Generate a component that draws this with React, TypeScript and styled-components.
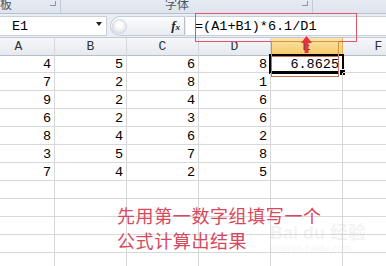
import React from "react";
import styled, { createGlobalStyle } from "styled-components";

const Global = createGlobalStyle`
  html, body { margin: 0; padding: 0; background: #fff; }
  body { width: 386px; height: 266px; overflow: hidden; }
`;

const Page = styled.div`
  position: relative;
  width: 386px;
  height: 266px;
  overflow: hidden;
  display: flex;
  flex-direction: column;
  background: #fff;
`;

const Ribbon = styled.div`
  height: 13px;
  flex: none;
  display: flex;
  background: linear-gradient(#e6ebf2, #dde4ed);
  border-bottom: 1px solid #b7c0cc;
  overflow: hidden;
`;

const RibbonGroup = styled.div<{ $w: number }>`
  width: ${(p) => p.$w}px;
  flex: none;
  position: relative;
  display: flex;
  align-items: flex-start;
  border-right: 1px solid #c2cad6;
  box-sizing: border-box;
`;

const GroupLabel = styled.span<{ $left: number }>`
  margin-left: ${(p) => p.$left}px;
  margin-top: -3px;
  font: 12px/13px "Noto Sans CJK SC", sans-serif;
  color: #4c5563;
`;

const Launcher = styled.span<{ $left: number }>`
  margin-left: ${(p) => p.$left}px;
  margin-top: 1px;
  width: 6px;
  height: 5px;
  border-right: 1px solid #8d96a3;
  border-bottom: 1px solid #8d96a3;
  box-sizing: border-box;
`;

const FormulaBar = styled.div`
  height: 23px;
  flex: none;
  display: flex;
  align-items: stretch;
  background: #e9eef4;
  padding: 2px 0 1px 0;
  box-sizing: border-box;
`;

const NameBox = styled.div`
  width: 107px;
  flex: none;
  background: #fff;
  border: 1px solid #c9d0da;
  border-left: none;
  box-sizing: border-box;
  display: flex;
  align-items: center;
  justify-content: space-between;
  padding: 0 4px 0 12px;
  font: 13.5px "Liberation Mono", monospace;
  color: #000;
`;

const DropArrow = styled.span`
  width: 0;
  height: 0;
  border-left: 3.5px solid transparent;
  border-right: 3.5px solid transparent;
  border-top: 4px solid #222;
  margin-top: -4px;
`;

const Capsule = styled.div`
  margin-left: 3px;
  width: 75px;
  flex: none;
  display: flex;
  align-items: center;
  justify-content: space-between;
  border-radius: 10px 0 0 10px;
  background: linear-gradient(#fbfcfd, #e8ecf1);
  border: 1px solid #c6cdd7;
  border-right: 1px solid #b8c0cb;
  box-sizing: border-box;
  padding-right: 4px;
`;

const Grip = styled.span`
  width: 13px;
  height: 13px;
  border-radius: 50%;
  margin-left: 1px;
  background: radial-gradient(circle at 50% 40%, #fff 20%, #e2e6ec 70%, #c9cfd8 100%);
  border: 1px solid #d3d8df;
`;

const Fx = styled.span`
  font: italic bold 13px "Liberation Serif", serif;
  color: #222;
  sub {
    font-size: 9px;
    vertical-align: baseline;
  }
`;

const FormulaInput = styled.div`
  flex: 1;
  background: #fff;
  border-top: 1px solid #c9d0da;
  border-bottom: 1px solid #c9d0da;
  margin-left: 1px;
  display: flex;
  align-items: center;
  padding-left: 9px;
  font: 13.5px "Liberation Mono", monospace;
  color: #000;
  white-space: pre;
`;

const Sheet = styled.div`
  display: grid;
  grid-template-columns: repeat(6, 72px);
  grid-auto-rows: 18px;
  margin-left: -17px;
`;

const HeaderCell = styled.div<{ $active?: boolean }>`
  height: 19px;
  box-sizing: border-box;
  display: flex;
  align-items: center;
  justify-content: center;
  font: 13px "Liberation Mono", monospace;
  color: #2f3339;
  border-top: 1px solid #c4cad2;
  border-right: 1px solid ${(p) => (p.$active ? "#e2b155" : "#d3d8de")};
  border-bottom: 1px solid ${(p) => (p.$active ? "#d8a13b" : "#b6bec8")};
  background: ${(p) =>
    p.$active
      ? "linear-gradient(#fbe3a8, #f5c96a)"
      : "linear-gradient(#f6f7f9, #e6e9ee)"};
`;

const Cell = styled.div<{ $selected?: boolean }>`
  position: relative;
  box-sizing: border-box;
  border-right: 1px solid #d8d8d8;
  border-bottom: 1px solid #d8d8d8;
  display: flex;
  align-items: center;
  justify-content: flex-end;
  padding: 2px 3px 0 0;
  font: 13.5px/16px "Liberation Mono", monospace;
  color: #000;
  ${(p) =>
    p.$selected &&
    `
    &::before {
      content: "";
      position: absolute;
      left: -2px; top: -1px; right: -2px; bottom: -2px;
      border: 2px solid #000;
      border-bottom-width: 3px;
    }
    &::after {
      content: "";
      position: absolute;
      right: -3px; bottom: -3px;
      width: 5px; height: 5px;
      background: #000;
      border: 1px solid #fff;
      border-right: none; border-bottom: none;
    }
  `}
`;

const Mark = styled.div<{ $l: number; $t: number; $w: number; $h: number; $c: string }>`
  position: absolute;
  left: ${(p) => p.$l}px;
  top: ${(p) => p.$t}px;
  width: ${(p) => p.$w}px;
  height: ${(p) => p.$h}px;
  border: 1px solid ${(p) => p.$c};
  box-sizing: border-box;
  pointer-events: none;
`;

const Arrow = styled.svg`
  position: absolute;
  left: 301px;
  top: 36px;
`;

const Note = styled.div`
  position: absolute;
  left: 117px;
  top: 203px;
  font: 18px/25px "Noto Sans CJK SC", sans-serif;
  letter-spacing: 0.6px;
  color: #d8485c;
`;

const Watermark = styled.div`
  position: absolute;
  left: 270px;
  top: 223px;
  color: rgba(200, 200, 200, 0.22);
  font: bold 18px/20px "Liberation Sans", "Noto Sans CJK SC", sans-serif;
  small {
    display: block;
    font: 9px/11px "Liberation Sans", sans-serif;
    letter-spacing: 0.5px;
  }
`;

const cols = ["A", "B", "C", "D", "E", "F"];
const data: (string | number)[][] = [
  [4, 5, 6, 8, "6.8625"],
  [7, 2, 8, 1],
  [9, 2, 4, 6],
  [6, 2, 3, 6],
  [8, 4, 6, 2],
  [3, 5, 7, 8],
  [7, 4, 2, 5],
];
const TOTAL_ROWS = 12;

export default function App() {
  const rows = Array.from({ length: TOTAL_ROWS }, (_, r) => data[r] ?? []);
  return (
    <Page>
      <Global />
      <Ribbon>
        <RibbonGroup $w={61}>
          <GroupLabel $left={0}>板</GroupLabel>
          <Launcher $left={38} />
        </RibbonGroup>
        <RibbonGroup $w={252}>
          <GroupLabel $left={104}>字体</GroupLabel>
          <Launcher $left={113} />
        </RibbonGroup>
      </Ribbon>
      <FormulaBar>
        <NameBox>
          E1
          <DropArrow />
        </NameBox>
        <Capsule>
          <Grip />
          <Fx>
            f<sub>x</sub>
          </Fx>
        </Capsule>
        <FormulaInput>=(A1+B1)*6.1/D1</FormulaInput>
      </FormulaBar>
      <Sheet>
        {cols.map((c) => (
          <HeaderCell key={c} $active={c === "E"}>
            {c}
          </HeaderCell>
        ))}
        {rows.map((row, r) =>
          cols.map((c, ci) => (
            <Cell key={`${c}${r}`} $selected={r === 0 && c === "E"}>
              {row[ci] ?? ""}
            </Cell>
          ))
        )}
      </Sheet>

      <Mark $l={195} $t={13} $w={162} $h={29} $c="#dd5566" />
      <Mark $l={271} $t={41} $w={68} $h={16} $c="#cf973d" />
      <Mark $l={271} $t={56} $w={68} $h={21} $c="#c4705e" />
      <Arrow width="11" height="17" viewBox="0 0 11 17">
        <polygon points="5.5,0 11,7 7.5,7 7.5,17 3.5,17 3.5,7 0,7" fill="#e8303e" />
      </Arrow>
      <Watermark>
        Bai du 经验
        <small>jingyan.baidu.com</small>
      </Watermark>
      <Note>
        先用第一数字组填写一个
        <br />
        公式计算出结果
      </Note>
    </Page>
  );
}
